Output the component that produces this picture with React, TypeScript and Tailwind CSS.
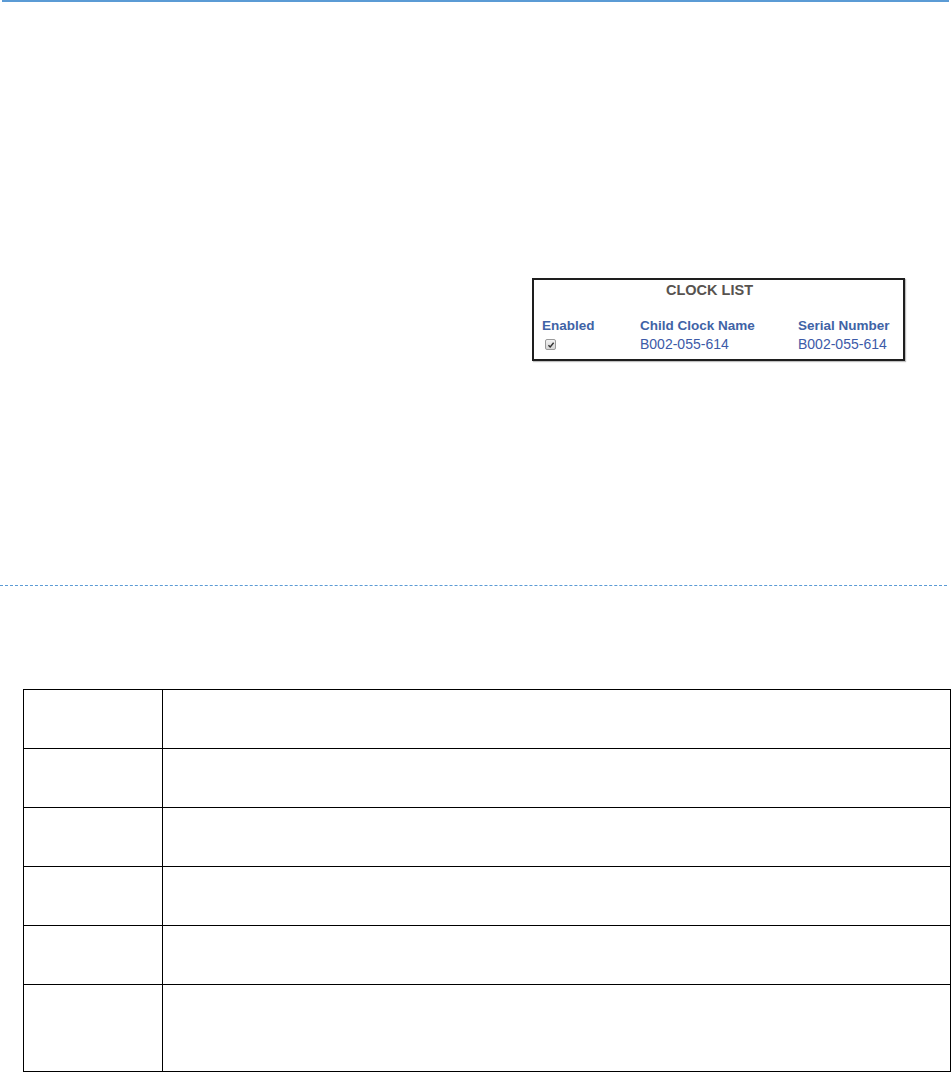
import type { ReactNode } from 'react'

const rows = [59, 59, 59, 59, 59, 87]

function Check() {
  return (
    <span className="ml-[3px] mt-[5px] flex h-[11px] w-[11px] items-center justify-center rounded-[2px] border border-[#9a9a9a] bg-gradient-to-b from-[#f2f2f2] to-[#d6d6d6]">
      <svg viewBox="0 0 10 10" className="h-[8px] w-[8px]">
        <path d="M1.8 5.2 L4 7.4 L8.3 2.2" fill="none" stroke="#333" strokeWidth="1.8" />
      </svg>
    </span>
  )
}

function Col({ head, children, w }: { head: string; children: ReactNode; w: string }) {
  return (
    <div className={`flex flex-col ${w}`}>
      <span className="text-[13.5px] font-bold leading-[16px] text-[#3f63a6]">{head}</span>
      <span className="text-[14px] leading-[20px] text-[#3c5aa8]">{children}</span>
    </div>
  )
}

export default function App() {
  return (
    <div className="h-[1072px] w-[951px] bg-white font-['Liberation_Sans',Arial,sans-serif]">
      <div className="mx-[2px] h-[2px] bg-[#5b9bd5]" />

      <div className="ml-[532px] mt-[276px] h-[83px] w-[373px] border-2 border-[#1e1e1e] shadow-[1px_1px_1px_rgba(0,0,0,0.25)]">
        <div className="pr-[18px] pt-[2px] text-center text-[14.5px] font-bold leading-[16px] text-[#57534f]">CLOCK LIST</div>
        <div className="mt-[20px] flex pl-[8px]">
          <Col head="Enabled" w="w-[98px]">
            <Check />
          </Col>
          <Col head="Child Clock Name" w="w-[158px]">
            B002-055-614
          </Col>
          <Col head="Serial Number" w="w-auto">
            B002-055-614
          </Col>
        </div>
      </div>

      <div className="mr-[4px] mt-[224px] border-t border-dashed border-[#5b9bd5]" />

      <table className="ml-[23px] mt-[103px] w-[928px] border-collapse">
        <tbody>
          {rows.map((h, i) => (
            <tr key={i} style={{ height: h }}>
              <td className="w-[139px] border border-black" />
              <td className="border border-black" />
            </tr>
          ))}
        </tbody>
      </table>
    </div>
  )
}
